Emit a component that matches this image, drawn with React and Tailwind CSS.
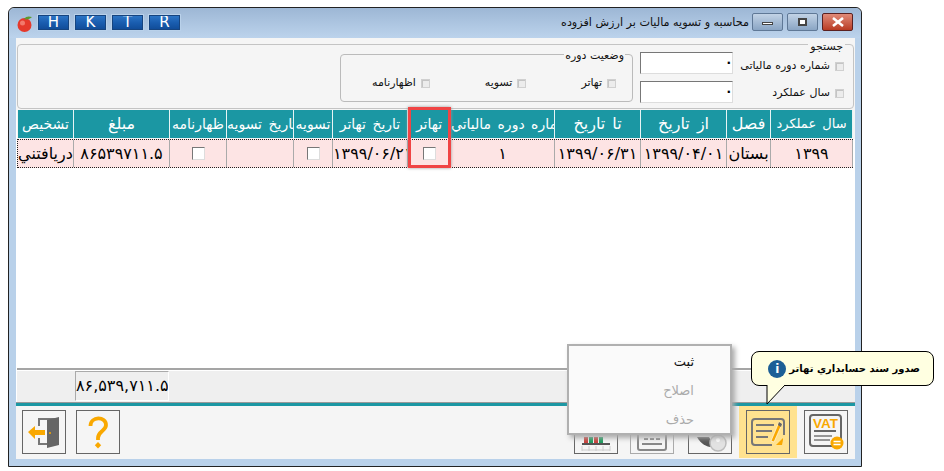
import React from "react";

const columns = [
  { title: "تشخیص", value: "دریافتني", w: "w-[56px]", size: "text-[14px]" },
  { title: "مبلغ", value: "۸۶۵۳۹۷۱۱.۵", w: "w-[96px]", size: "text-[16px]" },
  { title: "ظهارنامه", check: true, w: "w-[57px]", size: "text-[14px]" },
  { title: "تاریخ تسویه", value: "", w: "w-[67px]", size: "text-[14px]" },
  { title: "تسویه", check: true, w: "w-[39px]", size: "text-[14px]" },
  { title: "تاریخ تهاتر", value: "۱۳۹۹/۰۶/۲۱", w: "w-[75px]", size: "text-[14px]" },
  { title: "تهاتر", check: true, w: "w-[43px]", size: "text-[14px]" },
  { title: "شماره دوره مالیاتي", value: "۱", w: "w-[104px]", size: "text-[14px]" },
  { title: "تا تاریخ", value: "۱۳۹۹/۰۶/۳۱", w: "w-[86px]", size: "text-[16px]" },
  { title: "از تاریخ", value: "۱۳۹۹/۰۴/۰۱", w: "w-[86px]", size: "text-[16px]" },
  { title: "فصل", value: "بستان", w: "w-[44px]", size: "text-[16px]" },
  { title: "سال عملکرد", value: "۱۳۹۹", w: "w-[82px]", size: "text-[13px]" },
];

function TitleLetter({ children }) {
  return (
    <div className="w-[33px] h-[17px] flex items-center justify-center text-white text-[15px] leading-none bg-gradient-to-b from-[#2f78c8] via-[#1a5eb0] to-[#0f4a96] border border-[#b9d1ea] outline outline-[#16447f] -outline-offset-2">
      {children}
    </div>
  );
}

function Check({ className = "" }) {
  return <span className={"block w-[9px] h-[9px] bg-[#ececec] border border-[#d0d0d0] shadow-[inset_1px_1px_0_#c4c4c4] " + className} />;
}

function LabelCheck({ label }) {
  return (
    <div className="flex items-center gap-[5px] text-[11px] leading-[16px] text-[#111]">
      <span>{label}</span>
      <Check />
    </div>
  );
}

function GridCheck() {
  return <span className="block w-[13px] h-[13px] bg-white border border-[#777] border-r-[#ddd] border-b-[#ddd]" />;
}

function ToolButton({ children, className = "" }) {
  return <div className={"w-[44px] h-[44px] border border-[#666] flex items-center justify-center shrink-0 overflow-hidden " + className}>{children}</div>;
}

function DoorIcon() {
  return (
    <svg width="34" height="34" viewBox="0 0 34 34">
      <path d="M12 11V4h19v25H12v-6" fill="none" stroke="#777" strokeWidth="2" />
      <path d="M20 5l12-3v28l-12 3z" fill="#666" />
      <path d="M1 17l7-6v4h10v5H8v4z" fill="#f9a800" />
      <circle cx="23" cy="18" r="1" fill="#f9a800" />
    </svg>
  );
}

function HelpIcon() {
  return (
    <svg width="20" height="33" viewBox="0 0 20 33">
      <path d="M2.5 10C2.5 0 18 0 18 9c0 6-8 6-8 13v2" fill="none" stroke="#f9a800" strokeWidth="3.8" />
      <path d="M10 26l3.2 3.2-3.2 3.2-3.2-3.2z" fill="#f9a800" />
    </svg>
  );
}

function NoteIcon() {
  return (
    <svg width="34" height="28" viewBox="0 0 34 28">
      <path d="M21 27H4a3 3 0 0 1-3-3V4a3 3 0 0 1 3-3h26a3 3 0 0 1 3 3v13" fill="none" stroke="#777" strokeWidth="2" />
      <path d="M5 7h18M5 13h16M5 19h12" stroke="#777" strokeWidth="2" />
      <path d="M28 4l3 2-8 18-3-1z" fill="#f9a800" stroke="#fff" strokeWidth="0.6" />
      <path d="M28 4l3 2-1 3-3-2z" fill="#666" />
      <path d="M25 27l7-7v2l-1 5z" fill="#f9a800" />
    </svg>
  );
}

function VatIcon() {
  return (
    <svg width="38" height="38" viewBox="0 0 38 38">
      <rect x="3" y="2" width="31" height="31" rx="3" fill="none" stroke="#666" strokeWidth="2" />
      <text x="18.5" y="15" textAnchor="middle" fontSize="13.5" fontWeight="700" fontFamily="Liberation Sans, sans-serif" fill="#f9a800">VAT</text>
      <path d="M7 18h22" stroke="#666" strokeWidth="2" />
      <path d="M7 23h18M7 27h16" stroke="#777" strokeWidth="1.6" />
      <circle cx="30" cy="30" r="6.5" fill="#f9a800" />
      <path d="M26.5 28.5h7M26.5 31.5h7" stroke="#fff" strokeWidth="1.4" />
    </svg>
  );
}

function BarsIcon() {
  return (
    <svg width="42" height="42" viewBox="0 0 42 42">
      <path d="M9 26h4v7H9zM19 26h4v7h-4z" fill="#c8403a" />
      <path d="M14 26h4v7h-4zM24 26h4v7h-4z" fill="#1c9a5c" />
      <path d="M7 33h28" stroke="#555" strokeWidth="2" />
      <path d="M7 35v5M14 35v5M21 35v5M28 35v5M35 35v5M7 39h28" stroke="#ccc" strokeWidth="1" />
    </svg>
  );
}

function SheetIcon() {
  return (
    <svg width="42" height="42" viewBox="0 0 42 42">
      <rect x="7" y="22" width="28" height="17" rx="2" fill="none" stroke="#888" strokeWidth="2" />
      <path d="M13 28h4M19 28h4M25 28h4" stroke="#888" strokeWidth="2" />
      <path d="M11 33h20" stroke="#888" strokeWidth="2" />
    </svg>
  );
}

function GaugeIcon() {
  return (
    <svg width="42" height="42" viewBox="0 0 42 42">
      <path d="M8 26c4 7 10 11 18 10l-6-10z" fill="#555" />
      <circle cx="29" cy="32" r="8" fill="#e2e2e2" stroke="#bbb" strokeWidth="1.5" />
      <circle cx="29" cy="29" r="2" fill="#fff" />
    </svg>
  );
}

function Tomato() {
  return (
    <svg className="mr-[4px] shrink-0" width="16" height="17" viewBox="0 0 16 17">
      <circle cx="7.5" cy="10" r="7" fill="#e5392b" />
      <circle cx="5.5" cy="8" r="2.5" fill="#f2796c" />
      <path d="M7 4c2-3 5-3 8-2-2 2-5 3-8 2z" fill="#5c9a2e" />
    </svg>
  );
}

export default function App() {
  return (
    <div className="w-[944px] h-[471px] bg-white pl-[8px] pt-[7px] overflow-hidden font-['DejaVu_Sans',sans-serif]">
      <div dir="ltr" className="relative w-[854px] h-[460px] border border-[#222] rounded-t-[6px] bg-[#b9d1ea] flex flex-col">
        {/* title bar */}
        <div className="h-[30px] shrink-0 flex items-center pl-[8px] pr-[8px] rounded-t-[6px] bg-gradient-to-b from-[#9db7d5] to-[#bcd3ec]">
          <Tomato />
          <div className="flex gap-[4px] mb-[1px]">
            <TitleLetter>H</TitleLetter>
            <TitleLetter>K</TitleLetter>
            <TitleLetter>T</TitleLetter>
            <TitleLetter>R</TitleLetter>
          </div>
          <div dir="rtl" className="flex-1 text-right text-[11.2px] text-[#111]">محاسبه و تسویه مالیات بر ارزش افزوده</div>
          <div className="flex gap-[4px] pl-[3px] mb-[3px]">
            <div className="w-[31px] h-[18px] rounded-[2px] border border-[#5f7896] bg-gradient-to-b from-[#c2d3e6] to-[#8aa5c4] flex items-center justify-center">
              <span className="w-[11px] h-[3px] mt-[3px] bg-white border border-[#444]" />
            </div>
            <div className="w-[31px] h-[18px] rounded-[2px] border border-[#5f7896] bg-gradient-to-b from-[#c2d3e6] to-[#8aa5c4] flex items-center justify-center">
              <span className="w-[9px] h-[8px] bg-white border-2 border-[#444]" />
            </div>
            <div className="w-[31px] h-[18px] rounded-[2px] border border-[#5a2020] bg-gradient-to-b from-[#e08a78] to-[#b83a22] flex items-center justify-center">
              <svg width="14" height="10" viewBox="0 0 14 10">
                <path d="M2 1l10 8M12 1L2 9" stroke="#fff" strokeWidth="2.6" />
              </svg>
            </div>
          </div>
        </div>

        {/* client area */}
        <div className="flex-1 ml-[7px] mr-[6px] mb-[7px] bg-[#f5f5f5] flex flex-col min-h-0">
          {/* search group */}
          <div className="h-[72px] shrink-0 pt-[6px] px-[1px]">
            <div className="relative h-[65px] border border-[#c4c4c4] rounded-[4px] flex justify-end">
              <div className="absolute right-[8px] -top-[4px] bg-[#f5f5f5] px-[2px] text-[11px] leading-none text-[#111]">جستجو</div>
              <div className="h-[48px] w-[293px] mt-[9px] mr-[7px] relative border border-[#bbb] rounded-[4px] flex items-center justify-between pl-[31px] pr-[16px] pt-[10px]">
                <div className="absolute right-[7px] -top-[5px] bg-[#f5f5f5] px-[1px] text-[11px] leading-none text-[#111]">وضعیت دوره</div>
                <LabelCheck label="اظهارنامه" />
                <LabelCheck label="تسویه" />
                <LabelCheck label="تهاتر" />
              </div>
              <div className="flex flex-col gap-[7px] mt-[7px] mr-[6px]">
                {[0, 1].map((i) => (
                  <div key={i} className="w-[93px] h-[22px] bg-white border border-[#777] border-r-[#ddd] border-b-[#ddd] flex items-center justify-end pr-[1px] pb-[6px] text-[12px] font-bold leading-none text-black">.</div>
                ))}
              </div>
              <div className="w-[105px] mr-[9px] mt-[13px] flex flex-col items-end gap-[11px]">
                <LabelCheck label="شماره دوره مالیاتی" />
                <LabelCheck label="سال عملکرد" />
              </div>
            </div>
          </div>

          {/* grid */}
          <div dir="ltr" className="flex-1 min-h-0 bg-white flex flex-col pl-[1px]">
            <div className="flex h-[29px] shrink-0 bg-[#f5f5f5] pl-[1px]">
              {columns.map((c) => (
                <div key={c.title} className={c.w + " " + c.size + " shrink-0 h-[28px] bg-[#1b97a3] border-r border-[#e8f4f5] text-white flex items-center [justify-content:safe_center] overflow-hidden whitespace-nowrap"}>
                  <span dir="rtl" className="[word-spacing:2px]">{c.title}</span>
                </div>
              ))}
            </div>
            <div className="flex h-[29px] shrink-0 w-[836px] bg-[#fde4e4] border border-dotted border-[#222]">
              {columns.map((c) => (
                <div key={c.title} className={c.w + " shrink-0 border-r border-[#aaa] text-black text-[16px] flex items-center [justify-content:safe_center] overflow-hidden whitespace-nowrap"}>
                  {c.check ? <GridCheck /> : <span dir="rtl" className="tracking-[1px]">{c.value}</span>}
                </div>
              ))}
            </div>
            <div className="flex-1" />
            <div className="h-[2px] bg-[#a5a5a5] shrink-0" />
            <div className="h-[31px] bg-[#efefef] shrink-0 mt-[1px] pl-[58px]">
              <div className="w-[94px] h-[30px] border border-[#aaa] border-r-white border-b-white flex items-center [justify-content:safe_center] overflow-hidden whitespace-nowrap text-[16px] text-black">۸۶,۵۳۹,۷۱۱.۵</div>
            </div>
          </div>

          {/* toolbar */}
          <div className="h-[4px] bg-[#1b97a3] border-t border-[#999] shrink-0" />
          <div className="h-[53px] shrink-0 flex items-start justify-between pl-[6px] pr-[7px]">
            <div className="flex gap-[10px] pt-[4px]">
              <ToolButton><DoorIcon /></ToolButton>
              <ToolButton><HelpIcon /></ToolButton>
            </div>
            <div className="flex items-start">
              <ToolButton className="mt-[4px] mr-[12px]"><BarsIcon /></ToolButton>
              <ToolButton className="mt-[4px] mr-[14px] border-[#aaa]"><SheetIcon /></ToolButton>
              <ToolButton className="mt-[4px] mr-[7px]"><GaugeIcon /></ToolButton>
              <div className="w-[58px] h-[52px] bg-[#ffe28f] flex items-start justify-center pt-[4px] mr-[7px]">
                <ToolButton><NoteIcon /></ToolButton>
              </div>
              <ToolButton className="mt-[4px]"><VatIcon /></ToolButton>
            </div>
          </div>
        </div>

        {/* red highlight round the تهاتر column */}
        <div className="absolute left-[399px] top-[99px] w-[43px] h-[61px] border-[3px] border-[#f04545] shadow-[0_0_3px_#999] pointer-events-none" />

        {/* context menu */}
        <div dir="rtl" className="absolute left-[558px] top-[336px] w-[165px] h-[91px] bg-[#fafafa] border-2 border-[#b0b0b0] shadow-[3px_3px_5px_#aaa] flex flex-col pr-[36px] pt-[6px] gap-[9px] text-[13px] leading-[20px]">
          <span className="text-[#111]">ثبت</span>
          <span className="text-[#aaa]">اصلاح</span>
          <span className="text-[#aaa]">حذف</span>
        </div>

        {/* tooltip */}
        <div dir="rtl" className="absolute left-[742px] top-[343px] w-[183px] h-[35px] bg-[#ffffe1] border border-black rounded-[8px] flex items-center pr-[13px] gap-[3px] text-[10px] font-bold text-black whitespace-nowrap">
          <span>صدور سند حسابداري تهاتر</span>
          <span className="w-[18px] h-[18px] rounded-full bg-[#1c5f96] text-white text-[12px] font-bold flex items-center justify-center leading-none">i</span>
        </div>
        <svg className="absolute left-[757px] top-[377px]" width="22" height="20" viewBox="0 0 22 20">
          <path d="M1 0v19L19 0" fill="#ffffe1" stroke="#000" />
        </svg>
      </div>
    </div>
  );
}
